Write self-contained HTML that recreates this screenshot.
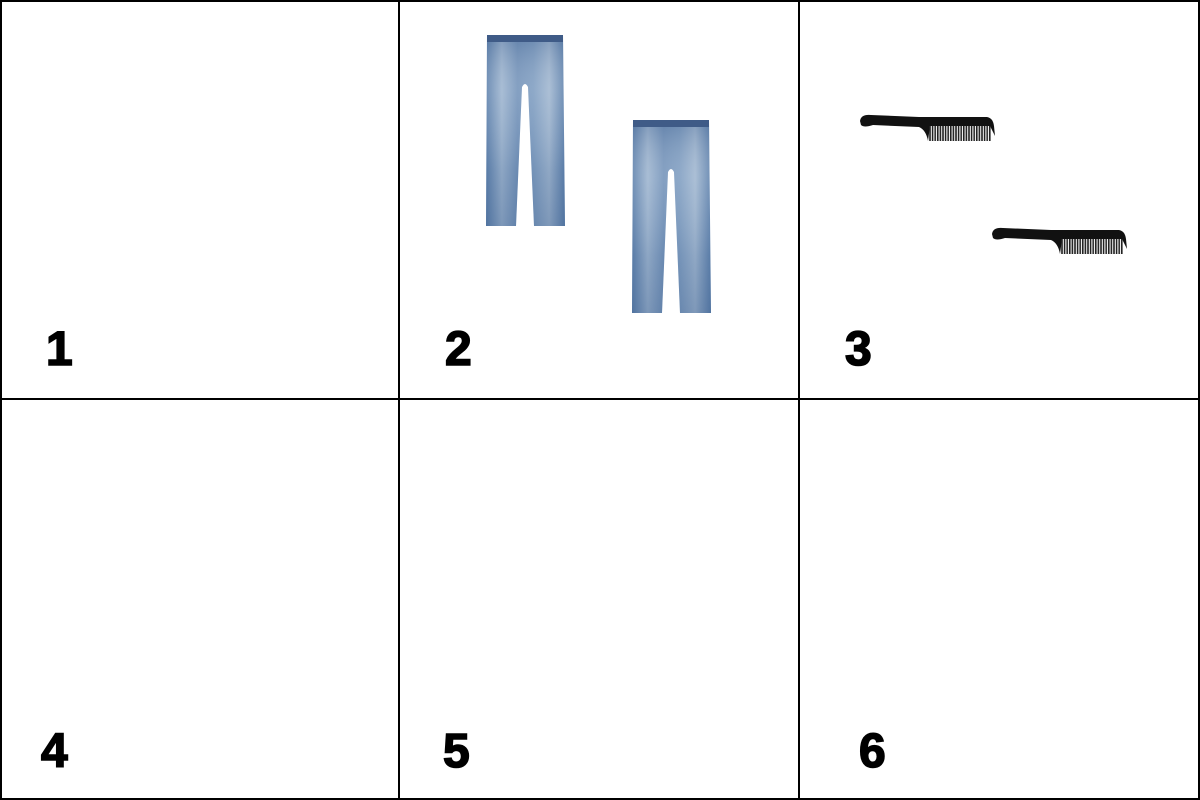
<!DOCTYPE html>
<html><head><style>
body{margin:0;width:1200px;height:800px;background:#fff;position:relative;overflow:hidden;font-family:"Liberation Sans",sans-serif}
.l{position:absolute;background:#000}
.n{position:absolute;font-weight:bold;font-size:48px;line-height:48px;color:#000;-webkit-text-stroke:1.6px #000}
svg{position:absolute}
</style></head><body>
<div class="l" style="left:0;top:0;width:1200px;height:2px"></div>
<div class="l" style="left:0;top:798px;width:1200px;height:2px"></div>
<div class="l" style="left:0;top:0;width:2px;height:800px"></div>
<div class="l" style="left:1198px;top:0;width:2px;height:800px"></div>
<div class="l" style="left:398px;top:0;width:2px;height:800px"></div>
<div class="l" style="left:798px;top:0;width:2px;height:800px"></div>
<div class="l" style="left:0;top:398px;width:1200px;height:2px"></div>

<div class="n" style="left:46px;top:326px">1</div>
<div class="n" style="left:445px;top:326px">2</div>
<div class="n" style="left:845px;top:326px">3</div>
<div class="n" style="left:41px;top:728px">4</div>
<div class="n" style="left:443px;top:728px">5</div>
<div class="n" style="left:859px;top:728px">6</div>

<svg width="0" height="0"><defs>
<linearGradient id="jg" x1="0" x2="1" y1="0" y2="0">
<stop offset="0" stop-color="#5f82ad"/><stop offset="0.2" stop-color="#9fb6d0"/><stop offset="0.4" stop-color="#7695bb"/><stop offset="0.6" stop-color="#819fc2"/><stop offset="0.8" stop-color="#a2b8d1"/><stop offset="1" stop-color="#5f82ad"/></linearGradient>
<linearGradient id="jv" x1="0" x2="0" y1="0" y2="1">
<stop offset="0" stop-color="#2d4f80" stop-opacity="0.3"/><stop offset="0.3" stop-color="#fff" stop-opacity="0.1"/><stop offset="0.7" stop-color="#2d4f80" stop-opacity="0.15"/><stop offset="1" stop-color="#2d4f80" stop-opacity="0.3"/></linearGradient>
<pattern id="teeth" width="2.6" height="10" patternUnits="userSpaceOnUse"><rect width="1.6" height="10" fill="#222"/></pattern>
</defs></svg>

<svg style="left:484px;top:35px" width="82" height="194" viewBox="0 0 82 194">
<path d="M3 0H79L81 191H50L44 52Q41 46 38 52L32 191H2Z" fill="url(#jg)"/>
<path d="M3 0H79L81 191H50L44 52Q41 46 38 52L32 191H2Z" fill="url(#jv)"/>
<rect x="3" y="0" width="76" height="7" fill="#3f5b87"/>
</svg>
<svg style="left:630px;top:120px" width="82" height="194" viewBox="0 0 82 194">
<path d="M3 0H79L81 193H50L44 52Q41 46 38 52L32 193H2Z" fill="url(#jg)"/>
<path d="M3 0H79L81 193H50L44 52Q41 46 38 52L32 193H2Z" fill="url(#jv)"/>
<rect x="3" y="0" width="76" height="7" fill="#3f5b87"/>
</svg>

<svg style="left:859px;top:114px" width="137" height="30" viewBox="0 0 137 30">
<path d="M1 7Q2 0 12 1L60 3H128Q134 4 135 12L136 22L131 12H71L69 27Q67 16 60 13L14 11Q5 14 2 11Z" fill="#111"/>
<rect x="70" y="12" width="62" height="15" fill="url(#teeth)"/>
</svg>
<svg style="left:991px;top:227px" width="137" height="30" viewBox="0 0 137 30">
<path d="M1 7Q2 0 12 1L60 3H128Q134 4 135 12L136 22L131 12H71L69 27Q67 16 60 13L14 11Q5 14 2 11Z" fill="#111"/>
<rect x="70" y="12" width="62" height="15" fill="url(#teeth)"/>
</svg>
</body></html>
